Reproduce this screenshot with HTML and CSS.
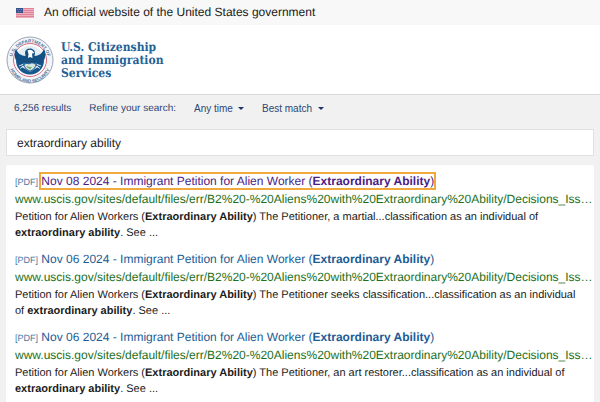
FILE: index.html
```html
<!DOCTYPE html>
<html lang="en">
<head>
	<meta charset="UTF-8">
	<title>Search results | USCIS</title>
	<link rel="stylesheet" href="styles.css">
</head>
<body>
<div class="banner">
	<svg class="flag" viewBox="0 0 18 10" aria-hidden="true">
		<rect width="18" height="10" fill="#efaebb"/>
		<path d="M0 .5h18M0 2.5h18M0 4.5h18M0 6.5h18M0 8.5h18" stroke="#df8498"/>
		<rect width="7" height="5" fill="#3a5490"/>
		<path d="M1 1.5h1M3 1.5h1M5 1.5h1M2 3.5h1M4 3.5h1" stroke="#6f88bb"/>
	</svg>
	<span>An official website of the United States government</span>
</div>
<header class="header">
	<a class="logo" href="#">
		<svg class="seal" viewBox="0 0 96 96" aria-hidden="true">
			<defs>
				<path id="arc-top" d="M14 61A36 36 0 1 1 82 61"/>
				<path id="arc-bottom" d="M5 50A43 43 0 0 0 91 50"/>
			</defs>
			<circle cx="48" cy="48" r="46" fill="#f3f5f8" stroke="#9aa5b3" stroke-width="2"/>
			<text class="seal-text"><textPath href="#arc-top" startOffset="50%" text-anchor="middle">U.S. DEPARTMENT OF</textPath></text>
			<text class="seal-text"><textPath href="#arc-bottom" startOffset="50%" text-anchor="middle">HOMELAND SECURITY</textPath></text>
			<circle cx="48" cy="48" r="33" fill="#fff" stroke="#d96a80" stroke-width="2"/>
			<circle cx="48" cy="49" r="29" fill="#e4edf4"/>
			<path d="M20 49a28 28 0 0 0 56 0l-8 1-4 12-16 10-16-10-4-12z" fill="#17578c"/>
			<path d="M20 25c4 11 10 14 19 15l-1-6c0-6 4-9 10-9 5 0 10 3 10 9l-1 6c9-1 15-4 19-15 7 16 0 30-14 35H34C20 55 13 41 20 25z" fill="#125086"/>
			<path d="M43 29c5-3 10-1 11 2l3 3-5 1 1 9-5-2-4 2 1-8z" fill="#fff"/>
			<path d="M36 49h24v10c0 6-6 10-12 13-6-3-12-7-12-13z" fill="#2b6ca0"/>
			<path d="M36 49h24v4H36z" fill="#16466f"/>
			<path d="M37 58c4-4 6 0 11-2 5-2 7 0 11 1-1 7-6 10-11 12-5-2-10-5-11-11z" fill="#d7e5df"/>
			<path d="M40 61c5-2 7 2 12 1l-4 5z" fill="#7caa72"/>
			<path d="M26 60l9-4M28 65l8-5M70 60l-9-4M68 65l-8-5" stroke="#cfdde8" stroke-width="2"/>
		</svg>
		<span class="logo-name">U.S. Citizenship<br>and Immigration<br>Services</span>
	</a>
</header>
<main class="content">
	<div class="filters">
		<span class="count">6,256 results</span>
		<span class="refine">Refine your search:</span>
		<label class="drop">
			<select aria-label="Time">
				<option>Any time</option>
				<option>Day</option>
				<option>Week</option>
			</select>
			<i class="caret"></i>
		</label>
		<label class="drop">
			<select aria-label="Sort by">
				<option>Best match</option>
				<option>Date</option>
			</select>
			<i class="caret"></i>
		</label>
	</div>
	<input class="search" type="text" aria-label="Search" value="extraordinary ability">
	<div class="results">
		<div class="result">
			<h2><span class="type">[PDF]</span> <a class="active" href="#">Nov 08 2024 - Immigrant Petition for Alien Worker (<b>Extraordinary Ability</b>)</a></h2>
			<div class="url">www.uscis.gov/sites/default/files/err/B2%20-%20Aliens%20with%20Extraordinary%20Ability/Decisions_Iss…</div>
			<p>Petition for Alien Workers (<b>Extraordinary Ability</b>) The Petitioner, a martial...classification as an individual of <b>extraordinary ability</b>. See ...</p>
		</div>
		<div class="result">
			<h2><span class="type">[PDF]</span> <a href="#">Nov 06 2024 - Immigrant Petition for Alien Worker (<b>Extraordinary Ability</b>)</a></h2>
			<div class="url">www.uscis.gov/sites/default/files/err/B2%20-%20Aliens%20with%20Extraordinary%20Ability/Decisions_Iss…</div>
			<p>Petition for Alien Workers (<b>Extraordinary Ability</b>) The Petitioner seeks classification...classification as an individual of <b>extraordinary ability</b>. See ...</p>
		</div>
		<div class="result">
			<h2><span class="type">[PDF]</span> <a href="#">Nov 06 2024 - Immigrant Petition for Alien Worker (<b>Extraordinary Ability</b>)</a></h2>
			<div class="url">www.uscis.gov/sites/default/files/err/B2%20-%20Aliens%20with%20Extraordinary%20Ability/Decisions_Iss…</div>
			<p>Petition for Alien Workers (<b>Extraordinary Ability</b>) The Petitioner, an art restorer...classification as an individual of <b>extraordinary ability</b>. See ...</p>
		</div>
	</div>
</main>
</body>
</html>
```

FILE: styles.css
```css
*{
	box-sizing: border-box;
}
body{
	margin: 0;
	background-color: #f1f1f1;
	color: #1b1b1b;
	font-family: "Liberation Sans", Arial, sans-serif;
	font-size: 11px;
	text-rendering: geometricPrecision;
}
a{
	text-decoration: none;
}
.banner{
	display: flex;
	align-items: center;
	gap: 10px;
	padding: 0 16px;
	background-color: #f8f8f8;
	font-size: 12px;
	line-height: 25px;
}
.flag{
	width: 18px;
	height: 10px;
}
.header{
	padding: 11px 6px 10px;
	background-color: #fff;
	border-bottom: 1px solid #d8d8d8;
}
.logo{
	display: flex;
	align-items: center;
	gap: 7px;
	color: #1f6296;
}
.seal{
	width: 48px;
	height: 48px;
}
.seal-text{
	fill: #4f7196;
	font-size: 9px;
	font-weight: bold;
}
.logo-name{
	font-family: "DejaVu Serif Condensed", "DejaVu Serif", serif;
	font-size: 12px;
	font-weight: bold;
	line-height: 13px;
}
.content{
	padding: 0 6px;
}
.filters{
	display: flex;
	align-items: center;
	gap: 18px;
	height: 34px;
	padding: 0 8px 8px;
	color: #2c4674;
	font-size: 10px;
}
.drop{
	display: flex;
	align-items: center;
	gap: 5px;
}
.drop select{
	appearance: none;
	margin: 0;
	padding: 0;
	border: 0;
	background: none;
	color: inherit;
	font: inherit;
}
.caret{
	border: 3px solid transparent;
	border-top-color: #1f3564;
	border-bottom: 0;
}
.search{
	display: block;
	width: 100%;
	height: 27px;
	padding: 0 10px;
	border: 1px solid #e0e0e0;
	background-color: #fff;
	color: #1b1b1b;
	font-family: inherit;
	font-size: 12px;
	text-rendering: inherit;
}
.results{
	margin-top: 9px;
	padding: 7px 9px;
	border-radius: 3px;
	background-color: #fff;
}
.result{
	margin-bottom: 9px;
}
.result h2{
	margin: 0;
	font-size: 12px;
	font-weight: normal;
	line-height: 18px;
}
.result h2 a{
	color: #1c5c95;
}
.result h2 a.active{
	color: #4b1d85;
	outline: 2px solid #efa93c;
}
.type{
	color: #3f7ba6;
	font-size: 9px;
	line-height: 9px;
}
.url{
	color: #1c701c;
	font-size: 12px;
	line-height: 18px;
	white-space: nowrap;
}
.result p{
	margin: 1px 0 0;
	line-height: 16px;
}
```
